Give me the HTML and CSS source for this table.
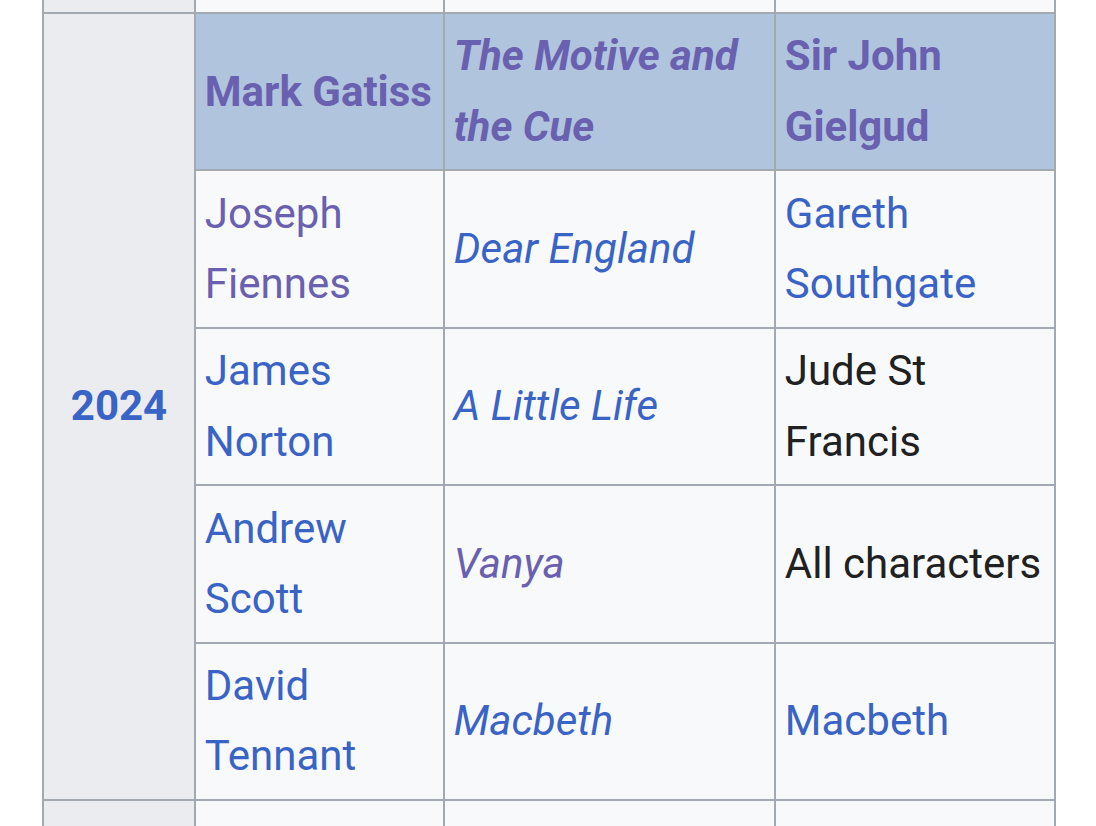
FILE: index.html
```html
<!DOCTYPE html>
<html lang="en">
<head>
<meta charset="utf-8">
<title>Roles</title>
<link rel="stylesheet" href="styles.css">
</head>
<body>
<div class="page">
  <table class="wikitable">
    <colgroup>
      <col class="c-year">
      <col class="c-actor">
      <col class="c-play">
      <col class="c-role">
    </colgroup>
    <tbody>
      <tr class="prev">
        <th class="year"></th>
        <td>&nbsp;</td>
        <td>&nbsp;</td>
        <td>&nbsp;</td>
      </tr>
      <tr class="head">
        <th class="year" rowspan="5"><a class="link" href="#">2024</a></th>
        <td><a class="visited" href="#">Mark Gatiss</a></td>
        <td><i><a class="visited" href="#">The Motive and the Cue</a></i></td>
        <td><a class="visited" href="#">Sir John Gielgud</a></td>
      </tr>
      <tr>
        <td><a class="visited" href="#">Joseph Fiennes</a></td>
        <td><i><a class="link" href="#">Dear England</a></i></td>
        <td><a class="link" href="#">Gareth Southgate</a></td>
      </tr>
      <tr>
        <td><a class="link" href="#">James Norton</a></td>
        <td><i><a class="link" href="#">A Little Life</a></i></td>
        <td>Jude St Francis</td>
      </tr>
      <tr>
        <td><a class="link" href="#">Andrew Scott</a></td>
        <td><i><a class="visited" href="#">Vanya</a></i></td>
        <td>All characters</td>
      </tr>
      <tr>
        <td><a class="link" href="#">David Tennant</a></td>
        <td><i><a class="link" href="#">Macbeth</a></i></td>
        <td><a class="link" href="#">Macbeth</a></td>
      </tr>
      <tr class="next">
        <th class="year"></th>
        <td>&nbsp;<br>&nbsp;</td>
        <td>&nbsp;</td>
        <td>&nbsp;</td>
      </tr>
    </tbody>
  </table>
</div>
</body>
</html>
```

FILE: styles.css
```css
html, body {
  margin: 0;
  padding: 0;
  background: #ffffff;
}

.page {
  height: 826px;
  overflow: hidden;
  padding-left: 42px;
}

.wikitable {
  margin-top: -75px;
  width: 1014px;
  table-layout: fixed;
  border-collapse: collapse;
  font-family: Roboto, "Liberation Sans", sans-serif;
  font-size: 42px;
  line-height: 70.4px;
  color: #202122;
  background: #f8f9fa;
}

.c-year { width: 152px; }
.c-actor { width: 249px; }
.c-play { width: 331px; }
.c-role { width: 280px; }

.wikitable th,
.wikitable td {
  border: 2px solid #a2a9b1;
  padding: 7.3px 8.8px;
  vertical-align: middle;
  text-align: left;
  font-weight: normal;
}

.wikitable th.year {
  background: #eaecf0;
  text-align: center;
  font-weight: bold;
}

.wikitable td {
  background: #f8f9fa;
}

.head td {
  background: #b0c4de;
  font-weight: bold;
}

a {
  text-decoration: none;
}

.link { color: #3a63c6; }
.visited { color: #6a60b0; }
```
